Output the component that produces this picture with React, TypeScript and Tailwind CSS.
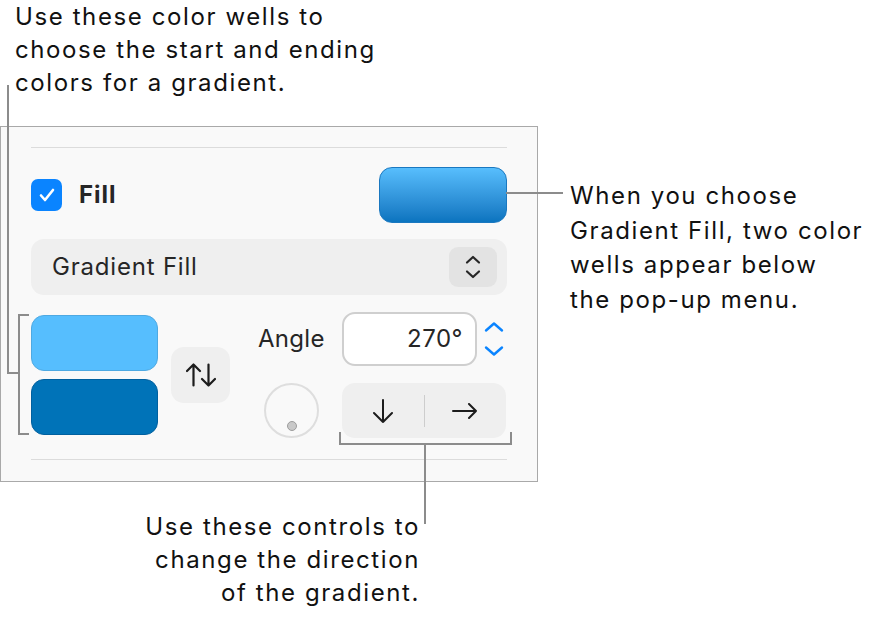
const Chevrons = ({ className }: { className?: string }) => (
  <svg width="18" height="26" viewBox="0 0 18 26" fill="none" className={className}>
    <path d="M3 8.5 9 3l6 5.5" stroke="currentColor" strokeWidth="2.2" strokeLinecap="round" strokeLinejoin="round" />
    <path d="M3 17.5 9 23l6-5.5" stroke="currentColor" strokeWidth="2.2" strokeLinecap="round" strokeLinejoin="round" />
  </svg>
);

const AngleStepper = () => (
  <svg width="20" height="36" viewBox="0 0 20 36" fill="none" className="ml-[7px]">
    <path d="M2 9.5 10 2.5l8 7" stroke="#0a84ff" strokeWidth="2.4" strokeLinecap="round" strokeLinejoin="round" />
    <path d="M2 26.5l8 7 8-7" stroke="#0a84ff" strokeWidth="2.4" strokeLinecap="round" strokeLinejoin="round" />
  </svg>
);

const SwapIcon = () => (
  <svg width="30" height="24" viewBox="0 0 30 24" fill="none" stroke="#1c1c1c" strokeWidth="2.2" strokeLinecap="round" strokeLinejoin="round">
    <path d="M7.5 22.5V1.5M1 8l6.5-6.5L14 8" />
    <path d="M22.5 1.5v21M16 16l6.5 6.5L29 16" />
  </svg>
);

const ArrowDown = () => (
  <svg width="22" height="24" viewBox="0 0 22 24" fill="none" stroke="#1c1c1c" strokeWidth="2" strokeLinecap="round" strokeLinejoin="round">
    <path d="M11 1v22M2 14l9 9 9-9" />
  </svg>
);

const ArrowRight = () => (
  <svg width="26" height="16" viewBox="0 0 26 16" fill="none" stroke="#1c1c1c" strokeWidth="2" strokeLinecap="round" strokeLinejoin="round">
    <path d="M1 8h23M17 1l7 7-7 7" />
  </svg>
);

const Panel = () => (
  <div className="mt-[126px] w-[538px] h-[356px] border border-[#a9a9a9] bg-[#f9f9f9] px-[30px] pt-[20px]">
    <div className="h-px bg-[#dcdcdc]" />

    <div className="mt-[19px] flex items-center justify-between h-[56px]">
      <div className="flex items-center gap-[17px]">
        <div className="w-[31px] h-[32px] rounded-[7px] bg-[#0a84ff] flex items-center justify-center">
          <svg width="18" height="16" viewBox="0 0 18 16" fill="none">
            <path d="M3 8.5l4 4.5L15 3" stroke="white" strokeWidth="2.6" strokeLinecap="round" strokeLinejoin="round" />
          </svg>
        </div>
        <span className="text-[24px] font-bold tracking-[1px] text-[#262626]">Fill</span>
      </div>
      <div className="w-[128px] h-[56px] rounded-[13px] border border-[#1a78c0] bg-gradient-to-b from-[#57befd] to-[#0a74bf]" />
    </div>

    <div className="mt-[16px] h-[56px] rounded-[13px] bg-[#efefef] flex items-center justify-between pl-[21px] pr-[10px]">
      <span className="text-[24px] tracking-[0.8px] text-[#262626]">Gradient Fill</span>
      <div className="w-[48px] h-[40px] rounded-[9px] bg-[#e3e3e3] flex items-center justify-center text-[#262626]">
        <Chevrons />
      </div>
    </div>

    <div className="mt-[17px] flex items-center">
      <div className="flex flex-col gap-[8px]">
        <div className="w-[127px] h-[56px] rounded-[13px] border border-[#4ea9e2] bg-[#56befe]" />
        <div className="w-[127px] h-[56px] rounded-[13px] border border-[#00609f] bg-[#0073b8]" />
      </div>
      <div className="ml-[13px] w-[59px] h-[56px] rounded-[13px] bg-[#efefef] flex items-center justify-center">
        <SwapIcon />
      </div>
      <div className="ml-[28px] grid grid-cols-[84px_164px] grid-rows-[54px_55px] gap-y-[17px]">
        <span className="self-center text-[24px] tracking-[0.3px] text-[#262626]">Angle</span>
        <div className="flex items-center">
          <div className="w-[135px] h-[54px] rounded-[13px] border-2 border-[#cfcfcf] bg-white flex items-center justify-end pr-[12px] text-[24px] tracking-[0.5px] text-[#262626]">
            270°
          </div>
          <AngleStepper />
        </div>
        <div className="self-center ml-[6px] w-[55px] h-[55px] rounded-full border-2 border-[#dedede] flex items-end justify-center pb-[5px]">
          <div className="w-[10px] h-[10px] rounded-full bg-[#c9c9c9] border border-[#9d9d9d]" />
        </div>
        <div className="h-[55px] rounded-[13px] bg-[#efefef] flex items-center">
          <div className="flex-1 flex justify-center"><ArrowDown /></div>
          <div className="w-px h-[32px] bg-[#cdcdcd]" />
          <div className="flex-1 flex justify-center"><ArrowRight /></div>
        </div>
      </div>
    </div>

    <div className="mt-[21px] h-px bg-[#dcdcdc]" />
  </div>
);

export default function App() {
  return (
    <div className="relative w-[870px] h-[622px] bg-white overflow-hidden font-['Inter',sans-serif] text-[#111]">
      <Panel />

      {/* top-left callout */}
      <p className="absolute left-[15px] top-[0px] text-[24px] leading-[33px] tracking-[1.6px]">
        Use these color wells to
        <br />
        choose the start and ending
        <br />
        colors for a gradient.
      </p>
      <div className="absolute left-[7px] top-[85px] w-[2px] h-[289px] bg-[#8c8c8c]" />
      <div className="absolute left-[7px] top-[372px] w-[12px] h-[2px] bg-[#8c8c8c]" />
      <div className="absolute left-[18px] top-[314px] w-[11px] h-[121px] border-2 border-r-0 border-[#8c8c8c]" />

      {/* right callout */}
      <div className="absolute left-[506px] top-[192px] w-[57px] h-[2px] bg-[#8c8c8c]" />
      <p className="absolute left-[570px] top-[179px] text-[24px] leading-[34.5px] tracking-[1.6px]">
        When you choose
        <br />
        Gradient Fill, two color
        <br />
        wells appear below
        <br />
        the pop-up menu.
      </p>

      {/* bottom callout */}
      <div className="absolute left-[339px] top-[432px] w-[173px] h-[13px] border-2 border-t-0 border-[#8c8c8c]" />
      <div className="absolute left-[424px] top-[443px] w-[2px] h-[81px] bg-[#8c8c8c]" />
      <p className="absolute right-[450px] top-[510px] text-right text-[24px] leading-[33px] tracking-[1.6px]">
        Use these controls to
        <br />
        change the direction
        <br />
        of the gradient.
      </p>
    </div>
  );
}
